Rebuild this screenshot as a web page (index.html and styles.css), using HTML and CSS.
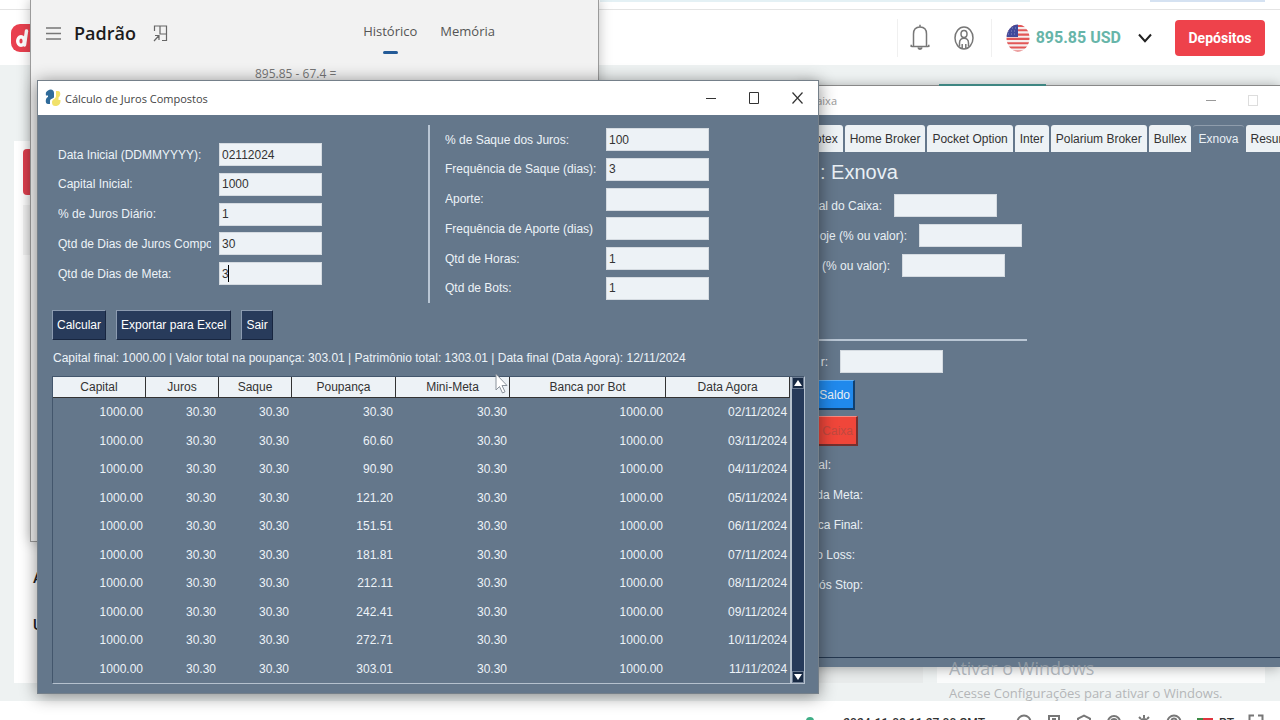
FILE: index.html
```html
<!DOCTYPE html>
<html lang="pt-BR">
<head>
<meta charset="utf-8">
<title>Cálculo de Juros Compostos</title>
<link rel="stylesheet" href="styles.css">
</head>
<body>
<div class="site">
  <div class="site-strip"><span class="strip-a"></span><span class="strip-b"></span></div>
  <header class="site-header">
    <svg class="logo" viewBox="0 0 28 28"><rect width="28" height="28" rx="9" fill="#e9404f"/><g fill="none" stroke="#fff" stroke-width="3.400" stroke-linecap="round"><ellipse cx="10" cy="17" rx="3.300" ry="4.300"/><path d="M15.500 7 13.500 21"/></g></svg>
    <div class="account">
      <div class="account-icons">
        <button class="icon-btn" aria-label="Notificações"><svg width="20" height="27" viewBox="0 0 20 27" fill="none" stroke="#777" stroke-width="1.500"><path d="M1.500 22.500H18.500M3.500 22V10C3.500 5.500 6 3 10 3s6.500 2.500 6.500 7v12M10 3V.8M1.200 20.800v2.200M18.800 20.800v2.200"/><path d="M8 23.500c.3 2.200 3.700 2.200 4 0" fill="#777"/></svg></button>
        <button class="icon-btn" aria-label="Perfil"><svg width="20" height="24" viewBox="0 0 20 24" fill="none" stroke="#777" stroke-width="1.500"><ellipse cx="10" cy="12" rx="9" ry="11"/><ellipse cx="10" cy="8" rx="3" ry="3.500"/><path d="M5.500 20.500v-3.500c0-6.500 9-6.500 9 0v3.500M8.200 22v-4M11.800 22v-4"/></svg></button>
      </div>
      <div class="balance">
        <svg width="24" height="28" viewBox="0 0 24 28"><defs><clipPath id="usa"><ellipse cx="12" cy="14" rx="11.500" ry="13.500"/></clipPath></defs><g clip-path="url(#usa)"><rect width="24" height="28" fill="#f6eeee"/><path d="M0 2h24M0 6.300h24M0 10.600h24M0 14.900h24M0 19.200h24M0 23.500h24M0 27.500h24" stroke="#e25757" stroke-width="2.100"/><rect width="12" height="13" fill="#424a9b"/><path d="M3 4h8M2 7h9M2 10h9" stroke="#8b90c4" stroke-dasharray="1 2"/></g></svg>
        <span>895.85 USD</span>
        <svg class="chevron" width="14" height="10" viewBox="0 0 14 10" fill="none" stroke="#222" stroke-width="2"><path d="M1 1.500 7 8.200 13 1.500"/></svg>
      </div>
      <button class="deposit">Depósitos</button>
    </div>
  </header>
  <main class="site-main">
    <div class="panel">
      <div class="panel-red"></div>
      <div class="panel-grey"></div>
      <div class="panel-letter">A</div>
      <div class="panel-letter">U</div>
    </div>
    <div class="bottom-boxes"><div class="box-grey"></div><div class="box-white"></div></div>
  </main>
  <footer class="site-footer">
    <span class="online"></span>
    <span class="clock">2024-11-03 11:27:00 GMT</span>
    <div class="foot-icons">
      <svg viewBox="0 0 16 16"><circle cx="8" cy="8" r="6.500"/><path d="M5 8l3 2"/></svg>
      <svg viewBox="0 0 16 16"><path d="M3 16V2h10v14M6 5h4"/></svg>
      <svg viewBox="0 0 16 16"><path d="M2 14V4.500L8 1.500l6 3V14"/></svg>
      <svg viewBox="0 0 16 16"><circle cx="8" cy="8" r="6"/><circle cx="8" cy="8" r="3"/></svg>
      <svg viewBox="0 0 16 16"><circle cx="8" cy="8" r="3"/><path d="M8 1v3M3 3l2 2M13 3l-2 2M1 8h3M12 8h3"/></svg>
      <svg viewBox="0 0 16 16"><circle cx="8" cy="8" r="6.500"/><path d="M5.500 7c0-3.500 5-3.500 5 0"/></svg>
    </div>
    <span class="flag-pt"></span><span class="lang">PT</span>
    <svg class="full" viewBox="0 0 16 16"><path d="M1.500 6V1.500H6M10 1.500h4.500V6"/></svg>
  </footer>
</div>

<section class="window calc">
  <div class="calc-bar">
    <button class="icon-btn" aria-label="Menu"><svg width="15" height="13" viewBox="0 0 15 13" stroke="#777" stroke-width="1.300"><path d="M0 1h15M0 6.500h15M0 12h15"/></svg></button>
    <h1 class="calc-mode">Padrão</h1>
    <svg class="calc-pin" width="15" height="17" viewBox="0 0 15 17" fill="none" stroke="#666" stroke-width="1.200"><path d="M1.500 6V1H13.500v14.500H9M7 1v8h6.500M1 16l5-5.500M2 10.500h4v4.500"/></svg>
    <nav class="calc-tabs"><button class="calc-tab active">Histórico</button><button class="calc-tab">Memória</button></nav>
  </div>
  <div class="calc-expr">895.85 - 67.4 =</div>
</section>

<section class="window caixa">
  <div class="caixa-title"><span class="caixa-name">aixa</span><span class="caixa-min"></span><span class="caixa-max"></span></div>
  <div class="caixa-body">
    <div class="tabs">
      <button class="tab">otex</button><button class="tab">Home Broker</button><button class="tab">Pocket Option</button><button class="tab">Inter</button><button class="tab">Polarium Broker</button><button class="tab">Bullex</button><button class="tab selected">Exnova</button><button class="tab">Resumo</button>
    </div>
    <h2 class="caixa-heading">: Exnova</h2>
    <div class="caixa-form">
      <div class="crow"><label class="w-a" for="c1">al do Caixa:</label><input id="c1" type="text"></div>
      <div class="crow"><label class="w-b" for="c2">oje (% ou valor):</label><input id="c2" type="text"></div>
      <div class="crow"><label class="w-c" for="c3">(% ou valor):</label><input id="c3" type="text"></div>
    </div>
    <hr class="caixa-line">
    <div class="crow"><label class="w-d" for="c4">r:</label><input id="c4" type="text"></div>
    <button class="raised blue">Saldo</button>
    <button class="raised red">Caixa</button>
    <div class="notes"><span class="w-e">al:</span><span class="w-f">da Meta:</span><span class="w-f">ca Final:</span><span class="w-g">o Loss:</span><span class="w-f">ós Stop:</span></div>
  </div>
</section>

<div class="watermark"><div class="wm-big">Ativar o Windows</div><div>Acesse Configurações para ativar o Windows.</div></div>

<section class="window juros">
  <div class="titlebar">
    <svg width="16" height="18" viewBox="0 0 16 18"><path d="M3 1.500C6-.5 9 1 9 4v4c0 2-4 1-4 4v3H3c-3 0-3-6 0-7V6.500H1C.5 4 1 2.500 3 1.500z" fill="#2f6b9a"/><path d="M11 2h2c3 0 3 5 .5 6.500V11h2c.3 3-1 5.500-4 6C8 17.500 7 16 7 13c0-3 4-3 4-6z" fill="#f1e16a"/></svg>
    <span class="title">Cálculo de Juros Compostos</span>
    <div class="controls">
      <button class="icon-btn" aria-label="Minimizar"><svg width="11" height="11" viewBox="0 0 11 11" fill="none" stroke="#333"><path d="M0 5.500h10"/></svg></button>
      <button class="icon-btn" aria-label="Maximizar"><svg width="11" height="12" viewBox="0 0 11 12" fill="none" stroke="#333"><path d="M.5.500h9v11h-9z"/></svg></button>
      <button class="icon-btn" aria-label="Fechar"><svg width="11" height="12" viewBox="0 0 11 12" fill="none" stroke="#333" stroke-width="1.200"><path d="M.5.500l10 11M10.500.500l-10 11"/></svg></button>
    </div>
  </div>
  <div class="juros-body">
    <form class="form">
      <div class="col col-left">
        <div class="row"><label for="f1">Data Inicial (DDMMYYYY):</label><input id="f1" type="text" value="02112024"></div>
        <div class="row"><label for="f2">Capital Inicial:</label><input id="f2" type="text" value="1000"></div>
        <div class="row"><label for="f3">% de Juros Diário:</label><input id="f3" type="text" value="1"></div>
        <div class="row"><label for="f4">Qtd de Dias de Juros Compostos:</label><input id="f4" type="text" value="30"></div>
        <div class="row"><label for="f5">Qtd de Dias de Meta:</label><input id="f5" type="text" value="3"><span class="caret"></span></div>
      </div>
      <div class="divider"></div>
      <div class="col col-right">
        <div class="row"><label for="g1">% de Saque dos Juros:</label><input id="g1" type="text" value="100"></div>
        <div class="row"><label for="g2">Frequência de Saque (dias):</label><input id="g2" type="text" value="3"></div>
        <div class="row"><label for="g3">Aporte:</label><input id="g3" type="text"></div>
        <div class="row"><label for="g4">Frequência de Aporte (dias)</label><input id="g4" type="text"></div>
        <div class="row"><label for="g5">Qtd de Horas:</label><input id="g5" type="text" value="1"></div>
        <div class="row"><label for="g6">Qtd de Bots:</label><input id="g6" type="text" value="1"></div>
      </div>
    </form>
    <div class="actions"><button>Calcular</button><button>Exportar para Excel</button><button>Sair</button></div>
    <p class="status">Capital final: 1000.00 | Valor total na poupança: 303.01 | Patrimônio total: 1303.01 | Data final (Data Agora): 12/11/2024</p>
    <div class="grid">
      <table>
        <colgroup><col class="k1"><col class="k2"><col class="k2"><col class="k4"><col class="k5"><col class="k6"><col></colgroup>
        <thead><tr><th>Capital</th><th>Juros</th><th>Saque</th><th>Poupança</th><th>Mini-Meta</th><th>Banca por Bot</th><th>Data Agora</th></tr></thead>
        <tbody>
          <tr><td>1000.00</td><td>30.30</td><td>30.30</td><td>30.30</td><td>30.30</td><td>1000.00</td><td>02/11/2024</td></tr>
          <tr><td>1000.00</td><td>30.30</td><td>30.30</td><td>60.60</td><td>30.30</td><td>1000.00</td><td>03/11/2024</td></tr>
          <tr><td>1000.00</td><td>30.30</td><td>30.30</td><td>90.90</td><td>30.30</td><td>1000.00</td><td>04/11/2024</td></tr>
          <tr><td>1000.00</td><td>30.30</td><td>30.30</td><td>121.20</td><td>30.30</td><td>1000.00</td><td>05/11/2024</td></tr>
          <tr><td>1000.00</td><td>30.30</td><td>30.30</td><td>151.51</td><td>30.30</td><td>1000.00</td><td>06/11/2024</td></tr>
          <tr><td>1000.00</td><td>30.30</td><td>30.30</td><td>181.81</td><td>30.30</td><td>1000.00</td><td>07/11/2024</td></tr>
          <tr><td>1000.00</td><td>30.30</td><td>30.30</td><td>212.11</td><td>30.30</td><td>1000.00</td><td>08/11/2024</td></tr>
          <tr><td>1000.00</td><td>30.30</td><td>30.30</td><td>242.41</td><td>30.30</td><td>1000.00</td><td>09/11/2024</td></tr>
          <tr><td>1000.00</td><td>30.30</td><td>30.30</td><td>272.71</td><td>30.30</td><td>1000.00</td><td>10/11/2024</td></tr>
          <tr><td>1000.00</td><td>30.30</td><td>30.30</td><td>303.01</td><td>30.30</td><td>1000.00</td><td>11/11/2024</td></tr>
        </tbody>
      </table>
      <div class="scroll">
        <button type="button" aria-label="Subir"><svg width="8" height="6" viewBox="0 0 8 6"><path d="M0 6 4 0l4 6z" fill="#fff"/></svg></button>
        <button type="button" aria-label="Descer"><svg width="8" height="6" viewBox="0 0 8 6"><path d="M0 0l4 6 4-6z" fill="#fff"/></svg></button>
      </div>
    </div>
  </div>
</section>
<svg class="pointer" width="13" height="21" viewBox="0 0 13 21"><path d="M1 1v16l3.500-3.500 3 6.500 2.500-1.200-3-6.300h5z" fill="#fff" stroke="#8a929b"/></svg>
</body>
</html>
```
FILE: styles.css
```css
* { box-sizing: border-box; }
body {
  margin: 0;
  height: 100vh;
  overflow: hidden;
  position: relative;
  background: #fff;
  font-family: "Liberation Sans", Arial, sans-serif;
  font-size: 12px;
}
button { font: inherit; padding: 0; border: 0; background: none; color: inherit; }
input { font: inherit; }
svg { display: block; flex: none; }
.icon-btn { display: block; }

/* web page behind the windows */
.site { display: flex; flex-direction: column; height: 100%; font-family: Roboto, sans-serif; }
.site-strip { display: flex; justify-content: flex-end; gap: 120px; height: 10px; padding-right: 15px; border-bottom: 1px solid #e4e4e4; }
.site-strip span { height: 2px; }
.strip-a { width: 430px; background: #e4f1f5; }
.strip-b { width: 115px; background: #d5e2f2; }
.site-header { display: flex; align-items: center; justify-content: space-between; height: 55px; padding: 0 15px 0 11px; }
.logo { width: 28px; height: 28px; }
.account { display: flex; align-items: center; }
.account-icons { display: flex; align-items: center; gap: 24px; height: 38px; padding: 0 17px 0 12px; border: solid #f0f0f0; border-width: 0 1px; }
.balance { display: flex; align-items: center; gap: 6px; padding: 0 23px 0 14px; color: #67b5a9; font-size: 16px; font-weight: 700; }
.chevron { margin-left: 11px; }
.deposit { width: 90px; height: 36px; border-radius: 4px; background: #ee424b; color: #fff; font-size: 14px; font-weight: 700; }
.site-main { flex: 1; display: flex; flex-direction: column; justify-content: flex-end; background: #eef2f2; }
.panel { width: 500px; height: 542px; margin-left: 14px; padding-top: 8px; background: #fff; }
.panel-red { height: 46px; margin-left: 9px; border-radius: 4px; background: #e0404f; }
.panel-grey { height: 50px; margin: 10px 0 304px 9px; background: #f4f4f4; }
.panel-letter { height: 47px; padding-left: 19px; color: #222; font-size: 15px; font-weight: 500; line-height: 38px; }
.bottom-boxes { display: flex; justify-content: flex-end; gap: 14px; height: 19px; padding: 0 15px 0 0; margin-top: -19px; margin-bottom: 18px; }
.bottom-boxes div { height: 19px; }
.box-grey { width: 110px; background: #e8ebeb; }
.box-white { width: 328px; background: #fbfcfc; }
.site-footer { display: flex; align-items: flex-start; justify-content: flex-end; height: 19px; padding: 13px 16px 0 0; overflow: hidden; background: #fff; color: #333; font-size: 12px; line-height: 16px; }
.site-footer svg { width: 16px; height: 16px; fill: none; stroke: #777; stroke-width: 2; }
.online { width: 8px; height: 8px; margin: 3px 29px 0 0; border-radius: 4px; background: #3fae86; }
.clock { padding-top: 1px; font-weight: 500; }
.foot-icons { display: flex; gap: 14px; margin: 0 15px 0 31px; }
.flag-pt { width: 16px; height: 12px; margin: 4px 6px 0 0; background: linear-gradient(90deg, #3d8b45 40%, #e0353f 40%); }
.lang { margin: 1px 14px 0 0; font-weight: 500; }

/* windows on the desktop */
.window { position: absolute; }
.calc { left: 30px; top: 0; width: 569px; height: 542px; border: 1px solid #9b9b9b; border-top: 0; background: #f2f2f2; box-shadow: 0 0 12px #0004; font-family: "Open Sans", sans-serif; }
.calc-bar { display: flex; align-items: center; height: 66px; padding: 0 103px 0 15px; }
.calc-mode { margin: 0 17px 0 13px; color: #1c1c1c; font-size: 18px; font-weight: 600; }
.calc-tabs { display: flex; gap: 23px; margin-left: auto; align-self: stretch; color: #555; font-size: 13px; }
.calc-tab { display: flex; flex-direction: column; align-items: center; padding-top: 22px; }
.calc-tab.active::after { content: ""; width: 15px; height: 3px; margin-top: 11px; border-radius: 2px; background: #235a97; }
.calc-expr { padding-left: 224px; color: #777; line-height: 16px; }

.caixa { left: 800px; right: 0; top: 85px; height: 582px; border-top: 1px solid #888; background: #64778b; box-shadow: 0 1px 12px #0005; color: #e9f0f5; }
.caixa::before { content: ""; position: absolute; left: 139px; top: -2px; width: 107px; height: 2px; background: #3f8682; }
.caixa-title { display: flex; align-items: center; height: 29px; padding-right: 22px; background: #fff; color: #999; font-family: "Open Sans", sans-serif; font-size: 11px; }
.caixa-name { width: 37px; text-align: right; }
.caixa-min { width: 10px; height: 1px; margin: 0 32px 0 auto; background: #999; }
.caixa-max { width: 10px; height: 11px; border: 1px solid #ddd; }
.caixa-body { height: 543px; padding-top: 10px; border-bottom: 1px solid #24374f; overflow: hidden; }
.tabs { display: flex; gap: 2px; margin-left: 10px; }
.tab { flex: none; height: 27px; padding: 0 5px; border-radius: 3px 3px 0 0; background: #edf2f5; color: #333; white-space: nowrap; }
.tab.selected { background: #64778b; border-top: 1px solid #8f9dac; color: #e9f0f5; }
.caixa-heading { margin: 0 0 0 20px; font-size: 20px; font-weight: 400; line-height: 40px; }
.caixa-form { display: flex; flex-direction: column; gap: 7px; margin-top: 2px; }
.crow { display: flex; align-items: center; gap: 12px; }
.crow input, .row input { flex: none; width: 103px; height: 23px; padding: 0 2px; border: 1px solid #d5dbe1; border-radius: 0; background: #edf2f6; color: #333; outline: 0; }
.crow label, .notes span { display: block; text-align: right; white-space: nowrap; }
.w-a { width: 82px; }
.w-b { width: 107px; }
.w-c { width: 90px; }
.w-d { width: 28px; }
.w-e { width: 31px; }
.w-f { width: 63px; }
.w-g { width: 55px; }
.caixa-line { width: 227px; height: 2px; margin: 62px 0 9px 0; border: 0; background: #b9c6d4; }
.raised { display: block; height: 30px; padding-right: 3px; border: 1px solid; border-width: 1px 2px 2px 1px; text-align: right; }
.blue { width: 55px; margin-top: 7px; background: #2089ec; border-color: #62b0f5 #12406e #12406e #62b0f5; }
.red { width: 58px; margin-top: 6px; background: #f0463a; border-color: #f88a80 #75302e #75302e #f88a80; color: #c0493f; }
.notes { display: flex; flex-direction: column; gap: 10px; padding-top: 9px; line-height: 20px; }

.watermark { position: absolute; left: 949px; top: 656px; color: #b4b6b8; font-family: "Open Sans", sans-serif; font-size: 13px; line-height: 24px; white-space: nowrap; }
.wm-big { color: #9aa1a8cc; font-size: 18px; line-height: 25px; }

.juros { left: 37px; right: 36%; top: 80px; border: 1px solid #75808a; background: #64778b; box-shadow: 0 2px 16px #0007; color: #edf3f8; }
.titlebar { display: flex; align-items: center; gap: 4px; height: 34px; padding: 0 15px 0 7px; background: #fff; color: #444; font-family: "Open Sans", sans-serif; font-size: 11px; }
.controls { display: flex; gap: 32px; margin-left: auto; }
.juros-body { padding: 10px 13px 9px 14px; }
.form { display: flex; align-items: center; height: 178px; padding-left: 6px; }
.col { display: flex; flex-direction: column; justify-content: space-between; }
.col-left { height: 142px; }
.col-right { height: 172px; }
.row { position: relative; display: flex; align-items: center; gap: 8px; }
.row label { width: 153px; overflow: hidden; white-space: nowrap; }
.caret { position: absolute; left: 170px; top: 3px; width: 1px; height: 17px; background: #000; }
.divider { align-self: stretch; width: 2px; margin: 0 15px 0 106px; background: #b9c6d4; }
.actions { display: flex; gap: 10px; margin-top: 7px; }
.actions button { height: 30px; padding: 0 4px; border: 1px solid; border-color: #8c9bb0 #182640 #182640 #8c9bb0; background: #283b5b; color: #fff; }
.status { margin: 8px 0; padding-left: 1px; line-height: 20px; white-space: nowrap; }
.grid { display: flex; border: 1px solid #43566c; border-color: #43566c #b5c1ce #b5c1ce #43566c; }
table { flex: 1; border-spacing: 0; table-layout: fixed; }
th { height: 21px; padding: 0; border-right: 1px solid #333; border-bottom: 1px solid #333; background: #edf2f6; color: #333; font-weight: 400; line-height: 20px; }
td { height: 28px; padding: 0 3px; text-align: right; line-height: 20px; }
tr:nth-child(even) td { height: 29px; }
.k1 { width: 93px; }
.k2 { width: 73px; }
.k4 { width: 104px; }
.k5 { width: 114px; }
.k6 { width: 156px; }
.scroll { display: flex; flex-direction: column; justify-content: space-between; width: 14px; border: solid #b5c1ce; border-width: 0 0 0 2px; background: #263a5a; }
.scroll button { display: flex; align-items: center; justify-content: center; height: 12px; border: 1px solid #6c7c92; background: #182a44; }
.pointer { position: absolute; left: 495px; top: 373px; }
```
